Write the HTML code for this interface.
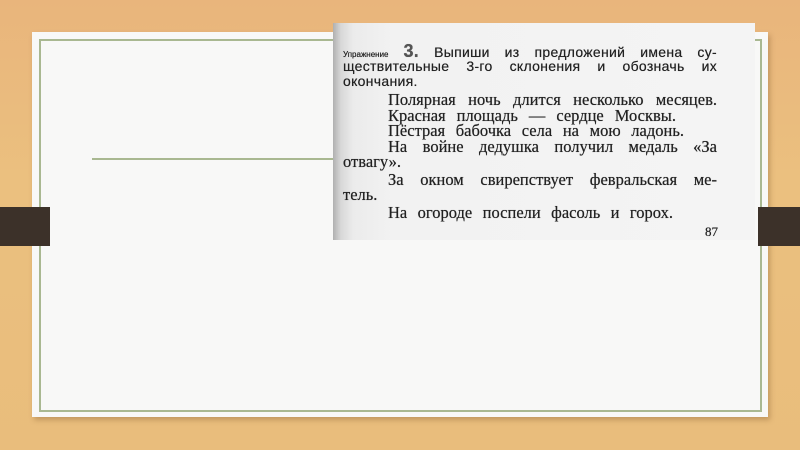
<!DOCTYPE html>
<html><head><meta charset="utf-8"><style>
html,body{margin:0;padding:0}
body{width:800px;height:450px;position:relative;overflow:hidden;background:linear-gradient(180deg,#e9b57c 0%,#ebc07f 40%,#e9bd7c 100%);}
.panel{position:absolute;left:32px;top:32px;width:736px;height:385px;background:#f8f8f7;box-shadow:2px 3px 5px rgba(120,80,40,.35);}
.frame{position:absolute;left:39px;top:39px;width:719px;height:369px;border:2px solid #a9b891;}
.hl{position:absolute;left:92px;top:158px;width:245px;height:2px;background:#a9b891;}
.bar{position:absolute;top:207px;height:39px;background:#3c3129;}
.book{position:absolute;left:333px;top:23px;width:422px;height:217px;background:linear-gradient(90deg,#b0b0b0 0px,#d8d8d8 8px,#ebebeb 20px,#f2f2f2 60px,#f4f4f4 100%);overflow:hidden;}
.s{position:absolute;left:10px;width:374px;font-family:"Liberation Sans",sans-serif;font-size:14px;color:#222;line-height:15px;text-align:justify;text-align-last:justify;letter-spacing:0.3px;text-shadow:0 0 0.4px #222}
.r{position:absolute;left:55px;width:329px;font-family:"Liberation Serif",serif;font-size:16.5px;color:#222;line-height:16px;white-space:nowrap;text-align:justify;text-align-last:justify;text-shadow:0 0 0.5px #222}
.l{left:10px;width:auto;text-align:left;text-align-last:left}
</style></head><body>
<div class="panel"></div>
<div class="frame"></div>
<div class="hl"></div>
<div class="bar" style="left:0;width:50px"></div>
<div class="bar" style="left:758px;width:42px"></div>
<div class="book">
<div class="s" style="top:21px"><span style="font-size:8px;letter-spacing:0">Упражнение</span> <b style="font-size:18px;color:#555">3.</b> Выпиши из предложений имена су-</div>
<div class="s" style="top:36px">ществительные 3-го склонения и обозначь их</div>
<div class="s" style="top:51px;text-align-last:left">окончания.</div>
<div class="r" style="top:69px">Полярная ночь длится несколько месяцев.</div>
<div class="r" style="top:85px;width:288px">Красная площадь — сердце Москвы.</div>
<div class="r" style="top:100px;width:296px">Пёстрая бабочка села на мою ладонь.</div>
<div class="r" style="top:116px">На войне дедушка получил медаль «За</div>
<div class="r l" style="top:131px">отвагу».</div>
<div class="r" style="top:149px">За окном свирепствует февральская ме-</div>
<div class="r l" style="top:164px">тель.</div>
<div class="r" style="top:182px;width:285px">На огороде поспели фасоль и горох.</div>
<div class="r l" style="top:201px;left:372px;font-size:13px">87</div>
</div>
</body></html>
